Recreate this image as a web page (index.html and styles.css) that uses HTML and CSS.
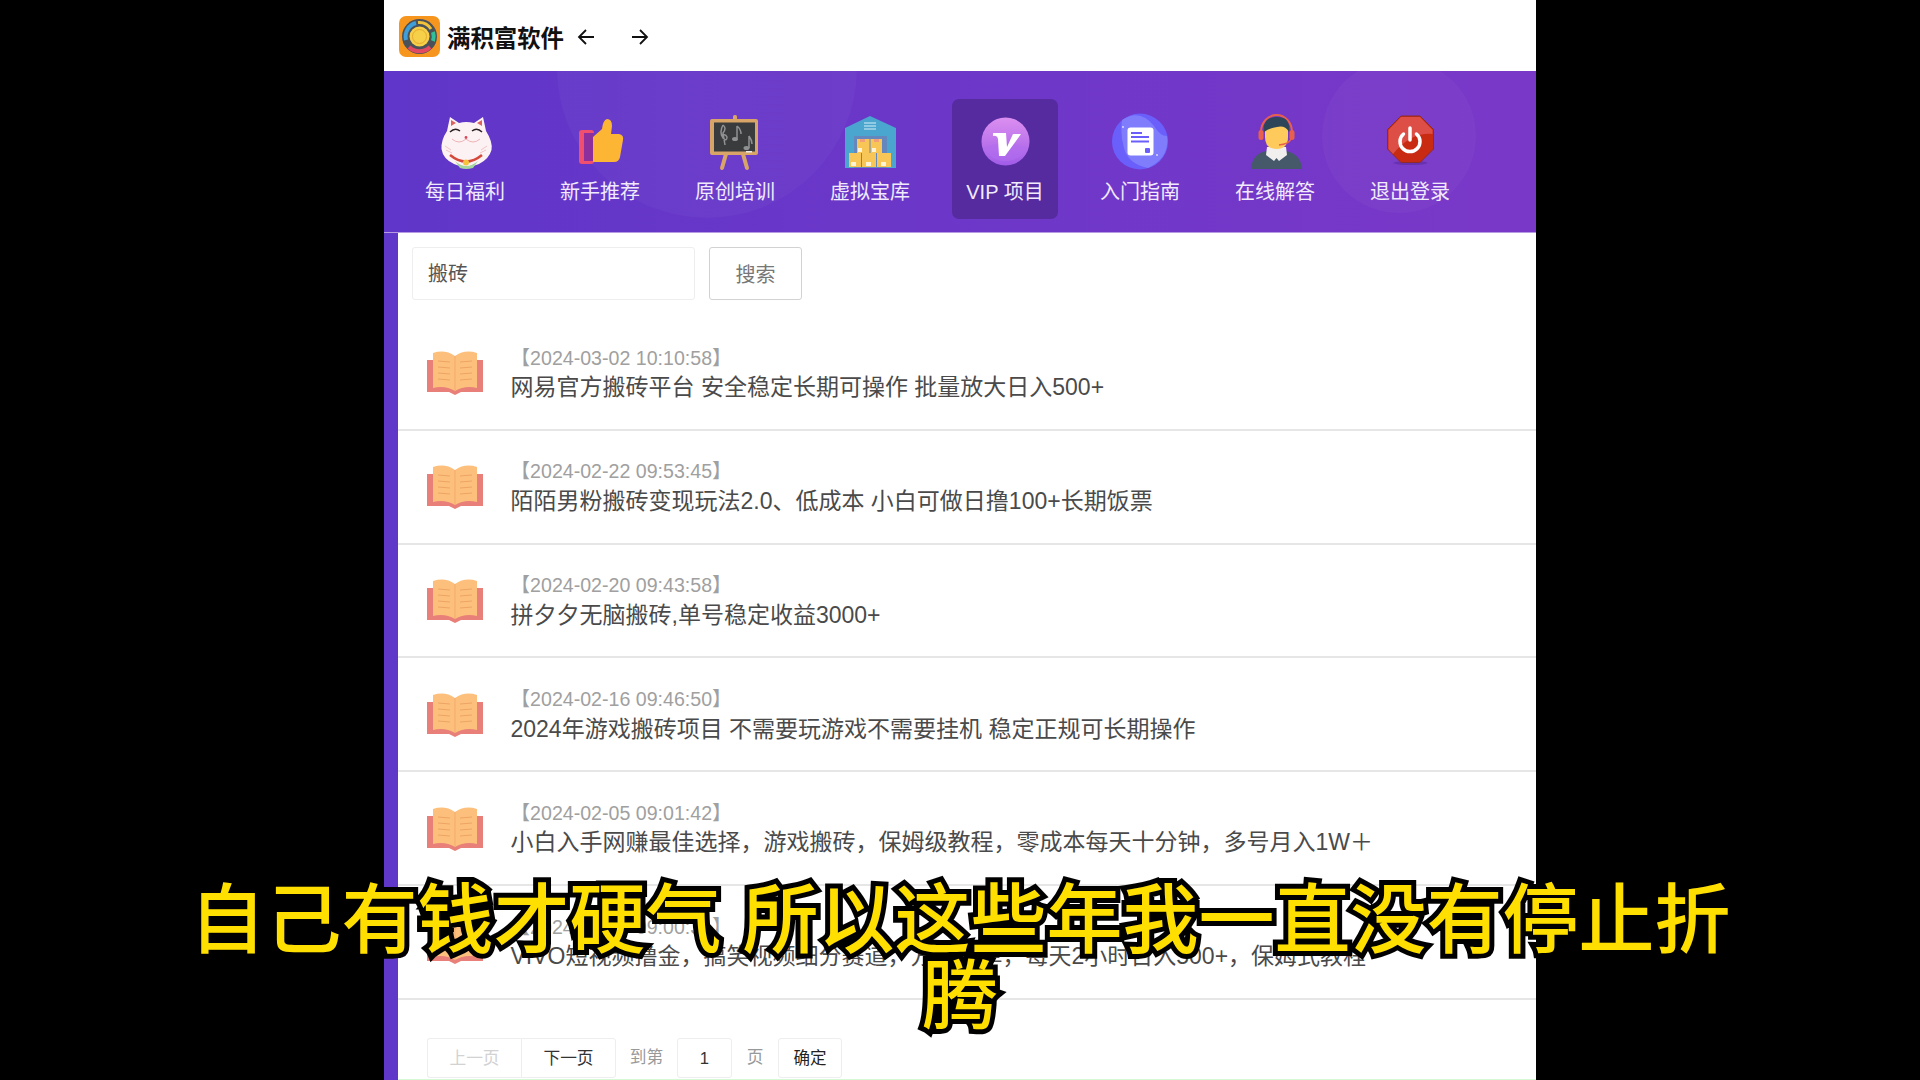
FILE: index.html
```html
<!DOCTYPE html>
<html lang="zh-CN">
<head>
<meta charset="utf-8">
<title>满积富软件</title>
<link rel="stylesheet" href="styles.css">
</head>
<body>
<div class="page">
  <header class="topbar">
    <svg class="logo" viewBox="0 0 41 41">
      <rect width="41" height="41" rx="7" fill="#f7961e"/>
      <circle cx="20.5" cy="20.5" r="17.5" fill="#4b5158"/>
      <path d="M7 24 A14 14 0 0 1 17 7" fill="none" stroke="#3f9fd8" stroke-width="4"/>
      <path d="M19 6.5 A14 14 0 0 1 32 13" fill="none" stroke="#f0c23c" stroke-width="3"/>
      <path d="M34 16 A14 14 0 0 1 34 25" fill="none" stroke="#2fc09a" stroke-width="4"/>
      <path d="M10 31 A15 15 0 0 0 31 31" fill="none" stroke="#e24a63" stroke-width="4"/>
      <circle cx="20.5" cy="20.5" r="10" fill="#f7d04a"/>
      <circle cx="20.5" cy="20.5" r="7" fill="none" stroke="#e6ab2c" stroke-width="1"/>
    </svg>
    <span class="brand">满积富软件</span>
    <svg class="arrow" viewBox="0 0 18 18"><path d="M9 2 L2 9 L9 16 M2 9 H17"/></svg>
    <svg class="arrow" viewBox="0 0 18 18"><path d="M9 2 L16 9 L9 16 M16 9 H1"/></svg>
  </header>

  <nav class="nav">
    <a class="nav-item">
      <svg class="nav-icon" viewBox="0 0 60 60">
        <path d="M15 5 L24 11 Q31 9 39 11 L48 5 Q50 14 51 19 Q58 30 56.5 38 Q54 47 44 52 Q31 58 19 52 Q8 47 6.5 37 Q6 28 12 19 Z" fill="#fdf2f3"/>
        <path d="M16 8 L21 11 L16 14 Z M47 8 L42 11 L47 14 Z" fill="#d9645f"/>
        <path d="M15 20 Q20 15 25 19 M37 19 Q42 15 47 20" fill="none" stroke="#2a2226" stroke-width="1.5"/>
        <path d="M17 27 Q24 33 31 27 Q38 33 45 27" fill="none" stroke="#efb3b5" stroke-width="1"/>
        <circle cx="31" cy="25.5" r="1.4" fill="#d9475a"/>
        <path d="M10 34 L16 38 M11 38 L17 41 M52 34 L46 38 M51 38 L45 41" stroke="#f2c3c4" stroke-width="1"/>
        <path d="M20 49 Q31 59 43 49 L38 56 Q31 58 25 56 Z" fill="#a4d6a0"/>
        <path d="M15 43 Q31 56 47 43" fill="none" stroke="#d5493a" stroke-width="2.5"/>
        <circle cx="31" cy="50.5" r="3" fill="#f5c43c"/>
      </svg>
      <span class="nav-label">每日福利</span>
    </a>
    <a class="nav-item">
      <svg class="nav-icon" viewBox="0 0 60 60">
        <rect x="9" y="18" width="15" height="34" rx="3" fill="#f0506e"/>
        <rect x="14" y="21" width="10" height="28" fill="#8e2f9e"/>
        <path d="M23 25 L32 17 Q33 8 37 7 Q42 7 42 14 L41 22 L49 22 Q54 23 53 28 L50 45 Q49 50 44 50 L23 50 Z" fill="#fdb534"/>
      </svg>
      <span class="nav-label">新手推荐</span>
    </a>
    <a class="nav-item">
      <svg class="nav-icon" viewBox="0 0 60 60">
        <path d="M21 42 L17 56 M38 42 L42 56" stroke="#d9a468" stroke-width="4" stroke-linecap="round"/>
        <rect x="28" y="3" width="4" height="6" rx="1.5" fill="#d9a468"/>
        <rect x="5" y="7" width="48" height="36" rx="2" fill="#d9a468"/>
        <rect x="9" y="10.5" width="41" height="29" fill="#3a3b3c"/>
        <g fill="none" stroke="#8f9193" stroke-width="1.5">
          <path d="M18 13 Q14 20 18 26 Q22 30 22 25 Q20 21 16 24 M18 13 Q22 16 18 21 L20 33"/>
          <path d="M32 14 L32 26 M32 14 Q36 17 36 22"/>
          <path d="M44 24 L44 36 M44 24 Q47 28 47 32"/>
        </g>
        <ellipse cx="30" cy="27" rx="3" ry="2" fill="#8f9193"/>
        <ellipse cx="41.5" cy="36" rx="3" ry="2" fill="#8f9193"/>
        <rect x="41" y="39" width="6" height="1.5" fill="#eee"/>
      </svg>
      <span class="nav-label">原创培训</span>
    </a>
    <a class="nav-item">
      <svg class="nav-icon" viewBox="0 0 60 60">
        <path d="M5 16 L30 4 L56 16 V56 H5 Z" fill="#4aa5cf"/>
        <rect x="14" y="24" width="33" height="32" fill="#6487bd"/>
        <path d="M24 11 H36 M24 14 H36 M24 17 H36" stroke="#a8d8ea" stroke-width="1.6"/>
        <path d="M17 27 H29.5 V41 H17 Z M30.5 27 H42 V41 H30.5 Z M9 41 H21 V55 H9 Z M22 41 H36 V55 H22 Z M37 41 H51 V55 H37 Z" fill="#f8c656"/>
        <path d="M20 27 h5 v3 h-5 Z M34 27 h5 v3 h-5 Z" fill="#f29e7a"/>
        <path d="M18 36 h4 v4 h-4 Z M32 36 h4 v4 h-4 Z M11 50 h5 v4 h-5 Z M26 50 h5 v4 h-5 Z M41 50 h5 v4 h-5 Z" fill="#fff3d6"/>
      </svg>
      <span class="nav-label">虚拟宝库</span>
    </a>
    <a class="nav-item is-active">
      <svg class="nav-icon" viewBox="0 0 60 60">
        <defs>
          <linearGradient id="vipFill" x1="0" y1="0" x2="0" y2="1">
            <stop offset="0" stop-color="#dc8ff0"/>
            <stop offset="1" stop-color="#a05ce8"/>
          </linearGradient>
        </defs>
        <circle cx="30.5" cy="29.5" r="24" fill="url(#vipFill)"/>
        <path d="M9 36 Q30 26 52 36 A24 24 0 0 1 9 36 Z" fill="#b26df0" opacity=".5"/>
        <path d="M18 21 L31 21 L32 35 L38 22 L46 22 L30 44 L24 44 L23 27 Q22 23 18 24 Z" fill="#fff"/>
      </svg>
      <span class="nav-label">VIP 项目</span>
    </a>
    <a class="nav-item">
      <svg class="nav-icon" viewBox="0 0 60 60">
        <circle cx="30" cy="29.5" r="28" fill="#6a5ffb"/>
        <path d="M12 8 Q30 -4 44 14 Q50 24 57 24 Q60 46 38 56 Q18 52 14 36 Q10 22 12 8 Z" fill="#7f7dfc"/>
        <rect x="17.5" y="15.5" width="26" height="28" rx="3" fill="#fff"/>
        <path d="M21 21 H32 M21 25 H39 M21 29.5 H39" stroke="#6a5ffb" stroke-width="2"/>
        <rect x="35" y="36" width="5" height="5" rx="1" fill="#6a5ffb"/>
        <circle cx="13" cy="15" r="1" fill="#d8d6ff"/>
        <circle cx="47" cy="43" r="1" fill="#d8d6ff"/>
      </svg>
      <span class="nav-label">入门指南</span>
    </a>
    <a class="nav-item">
      <svg class="nav-icon" viewBox="0 0 60 60">
        <path d="M6 57 Q7 42 21 39 L41 39 Q56 42 57 57 Z" fill="#46596b"/>
        <path d="M22 35 H41 L42 43 L34 49 L31.5 46 L29 49 L21 43 Z" fill="#f2f0ee"/>
        <path d="M16 20 A15.5 17 0 0 1 47 20" fill="none" stroke="#e8604c" stroke-width="2"/>
        <rect x="13.5" y="18" width="5" height="10" rx="2.5" fill="#e8604c"/>
        <rect x="44.5" y="18" width="5" height="10" rx="2.5" fill="#e8604c"/>
        <path d="M20 14 H43 V25 Q43 37 31.5 37 Q20 37 20 25 Z" fill="#fdca5b"/>
        <path d="M19 20 Q17 5 32 5 Q46 5 44 20 Q40 13 32 15 Q24 16 19 20 Z" fill="#2c4558"/>
        <path d="M46 27 Q44 32 34 33" fill="none" stroke="#e8604c" stroke-width="1.5"/>
      </svg>
      <span class="nav-label">在线解答</span>
    </a>
    <a class="nav-item">
      <svg class="nav-icon power-icon" viewBox="0 0 60 60">
        <ellipse cx="31.5" cy="51" rx="17" ry="2" fill="#5a2aa0" opacity=".6"/>
        <path d="M22 4 H41 L54.5 17.5 V37 L41 50.5 H22 L8.5 37 V17.5 Z" fill="#c92a12" stroke="#8e2a2a" stroke-width="1"/>
        <path d="M22 5 H41 L53.5 18 V22 Q32 20 14 42 L9.5 37 V18 Z" fill="#dd4f46"/>
        <path d="M37.5 22 A10 10 0 1 1 24.5 22" fill="none" stroke="#fff" stroke-width="3.5" stroke-linecap="round"/>
        <path d="M31 16 V28" stroke="#fff" stroke-width="3.5" stroke-linecap="round"/>
      </svg>
      <span class="nav-label">退出登录</span>
    </a>
  </nav>

  <main class="content">
    <form class="search">
      <div class="search-input">搬砖</div>
      <button class="search-btn" type="button">搜索</button>
    </form>

    <ul class="list">
      <li class="row">
        <svg class="book" viewBox="0 0 56 45"><use href="#book"/></svg>
        <div class="row-text"><div class="row-date">【2024-03-02 10:10:58】</div><div class="row-title">网易官方搬砖平台 安全稳定长期可操作 批量放大日入500+</div></div>
      </li>
      <li class="row">
        <svg class="book" viewBox="0 0 56 45"><use href="#book"/></svg>
        <div class="row-text"><div class="row-date">【2024-02-22 09:53:45】</div><div class="row-title">陌陌男粉搬砖变现玩法2.0、低成本 小白可做日撸100+长期饭票</div></div>
      </li>
      <li class="row">
        <svg class="book" viewBox="0 0 56 45"><use href="#book"/></svg>
        <div class="row-text"><div class="row-date">【2024-02-20 09:43:58】</div><div class="row-title">拼夕夕无脑搬砖,单号稳定收益3000+</div></div>
      </li>
      <li class="row">
        <svg class="book" viewBox="0 0 56 45"><use href="#book"/></svg>
        <div class="row-text"><div class="row-date">【2024-02-16 09:46:50】</div><div class="row-title">2024年游戏搬砖项目 不需要玩游戏不需要挂机 稳定正规可长期操作</div></div>
      </li>
      <li class="row">
        <svg class="book" viewBox="0 0 56 45"><use href="#book"/></svg>
        <div class="row-text"><div class="row-date">【2024-02-05 09:01:42】</div><div class="row-title">小白入手网赚最佳选择，游戏搬砖，保姆级教程，零成本每天十分钟，多号月入1W＋</div></div>
      </li>
      <li class="row">
        <svg class="book" viewBox="0 0 56 45"><use href="#book"/></svg>
        <div class="row-text"><div class="row-date">【2024-01-24 09:00:31】</div><div class="row-title">VIVO短视频撸金，搞笑视频细分赛道，方法简单，每天2小时日入500+，保姆式教程</div></div>
      </li>
    </ul>

    <div class="pager">
      <span class="pg-btn pg-prev">上一页</span>
      <span class="pg-btn pg-next">下一页</span>
      <span class="pg-text pg-to">到第</span>
      <span class="pg-num">1</span>
      <span class="pg-text pg-unit">页</span>
      <span class="pg-ok">确定</span>
    </div>
  </main>
  <div class="edge"></div>
</div>

<div class="subtitle">
  <div>自己有钱才硬气 所以这些年我一直没有停止折</div>
  <div>腾</div>
</div>

<svg class="defs" width="0" height="0">
  <defs>
    <g id="book">
      <path d="M0 10 H8 V30 H48 V10 H56 V42 H34 L28 45 L22 42 H0 Z" fill="#e87f78"/>
      <path d="M6 3 Q18 -1 28 6 Q38 -1 50 3 V38 Q38 35 28 41 Q18 35 6 38 Z" fill="#fdc07c"/>
      <path d="M28 6 V41" stroke="#f3a96c" stroke-width="1"/>
      <path d="M11 11 L23 12 M11 17 L23 18 M11 23 L23 24 M11 29 L23 30 M45 11 L33 12 M45 17 L33 18 M45 23 L33 24 M45 29 L33 30" stroke="#eda465" stroke-width="1"/>
    </g>
  </defs>
</svg>
</body>
</html>
```
FILE: styles.css
```css
* { box-sizing: border-box; }
html, body { margin: 0; height: 100%; }
body {
  background: #000;
  font-family: "Liberation Sans", "Noto Sans CJK SC", sans-serif;
  overflow: hidden;
  position: relative;
}
.page {
  width: 1152px;
  height: 1080px;
  margin: 0 auto;
  background: #5f37c9;
  display: flex;
  flex-direction: column;
  overflow: hidden;
  position: relative;
}
.topbar {
  height: 71px;
  flex: none;
  background: #fff;
  display: flex;
  align-items: center;
  padding: 2px 0 0 15px;
}
.logo { width: 41px; height: 41px; flex: none; }
.brand {
  width: 117px;
  margin-left: 7px;
  font-size: 23.4px;
  font-weight: 700;
  color: #111;
  white-space: nowrap;
}
.arrow {
  width: 18px;
  height: 18px;
  flex: none;
  margin-left: 13px;
  fill: none;
  stroke: #111;
  stroke-width: 1.8;
}
.arrow + .arrow { margin-left: 36px; }

.nav {
  height: 162px;
  flex: none;
  position: relative;
  overflow: hidden;
  display: flex;
  padding: 28px 0 0 13.5px;
  background: linear-gradient(90deg, #5f36c9, #7a38c8);
  border-bottom: 1px solid #b79be2;
}
.nav::before, .nav::after {
  content: "";
  position: absolute;
  border-radius: 50%;
  background: rgba(255, 255, 255, .03);
}
.nav::before { left: 173px; top: -153px; width: 300px; height: 300px; }
.nav::after { left: 938px; top: -12px; width: 154px; height: 154px; }
.nav-item {
  width: 135px;
  flex: none;
  position: relative;
  z-index: 1;
  display: flex;
  flex-direction: column;
  align-items: center;
}
.is-active::before {
  content: "";
  position: absolute;
  z-index: -1;
  left: 14px;
  top: 0;
  width: 106px;
  height: 120px;
  border-radius: 7px;
  background: #552b9f;
}
.nav-icon { width: 60px; height: 60px; margin-top: 13px; flex: none; }
.power-icon { margin-right: 2px; }
.nav-label {
  margin-top: 6px;
  font-size: 20px;
  line-height: 28px;
  color: #f1eafd;
  white-space: nowrap;
}

.content {
  flex: 1;
  margin-left: 14px;
  background: #fff;
  min-height: 0;
}
.search {
  display: flex;
  gap: 14px;
  padding: 14px 0 0 14px;
  margin: 0;
}
.search-input {
  width: 283px;
  height: 53px;
  padding-left: 15px;
  border: 1px solid #eee;
  border-radius: 3px;
  font-size: 20px;
  line-height: 52px;
  color: #555;
}
.search-btn {
  width: 93px;
  height: 53px;
  padding: 0;
  background: #fff;
  border: 1px solid #d2d2d2;
  border-radius: 3px;
  font: inherit;
  font-size: 20px;
  color: #777;
}
.list { list-style: none; margin: 17px 0 0; padding: 0; }
.row {
  height: 113.8px;
  display: flex;
  align-items: center;
  gap: 27.5px;
  padding-left: 29px;
  border-bottom: 2px solid #e6e6e6;
}
.book { width: 56px; height: 45px; flex: none; }
.row-date { font-size: 19.6px; line-height: 31px; color: #a0a0a0; white-space: nowrap; }
.row-title { font-size: 23px; line-height: 31px; margin-top: -1.5px; color: #4a4a4a; white-space: nowrap; }

.pager {
  display: flex;
  align-items: stretch;
  height: 40px;
  margin: 38px 0 0 29px;
  font-size: 16.7px;
  line-height: 39px;
}
.pg-btn, .pg-num, .pg-ok {
  border: 1px solid #eee;
  border-radius: 3px;
  text-align: center;
  color: #333;
}
.pg-prev { width: 94px; color: #d2d2d2; border-right: 0; border-radius: 3px 0 0 3px; }
.pg-next { width: 95px; border-radius: 0 3px 3px 0; }
.pg-text { color: #999; text-align: center; }
.pg-to { width: 61px; }
.pg-num { width: 55px; }
.pg-unit { width: 46px; }
.pg-ok { width: 64px; color: #222; font-size: 16.5px; }
.edge {
  position: absolute;
  left: 14px;
  right: 0;
  bottom: 0;
  height: 1px;
  background: #d4f9d4;
}
.defs { position: absolute; }

.subtitle {
  position: absolute;
  left: 0;
  right: 0;
  top: 883px;
  text-align: center;
  font-size: 76px;
  line-height: 76px;
  font-weight: 500;
  color: #ffdf00;
  -webkit-text-stroke: 10px #000;
  paint-order: stroke fill;
  white-space: nowrap;
}
```
